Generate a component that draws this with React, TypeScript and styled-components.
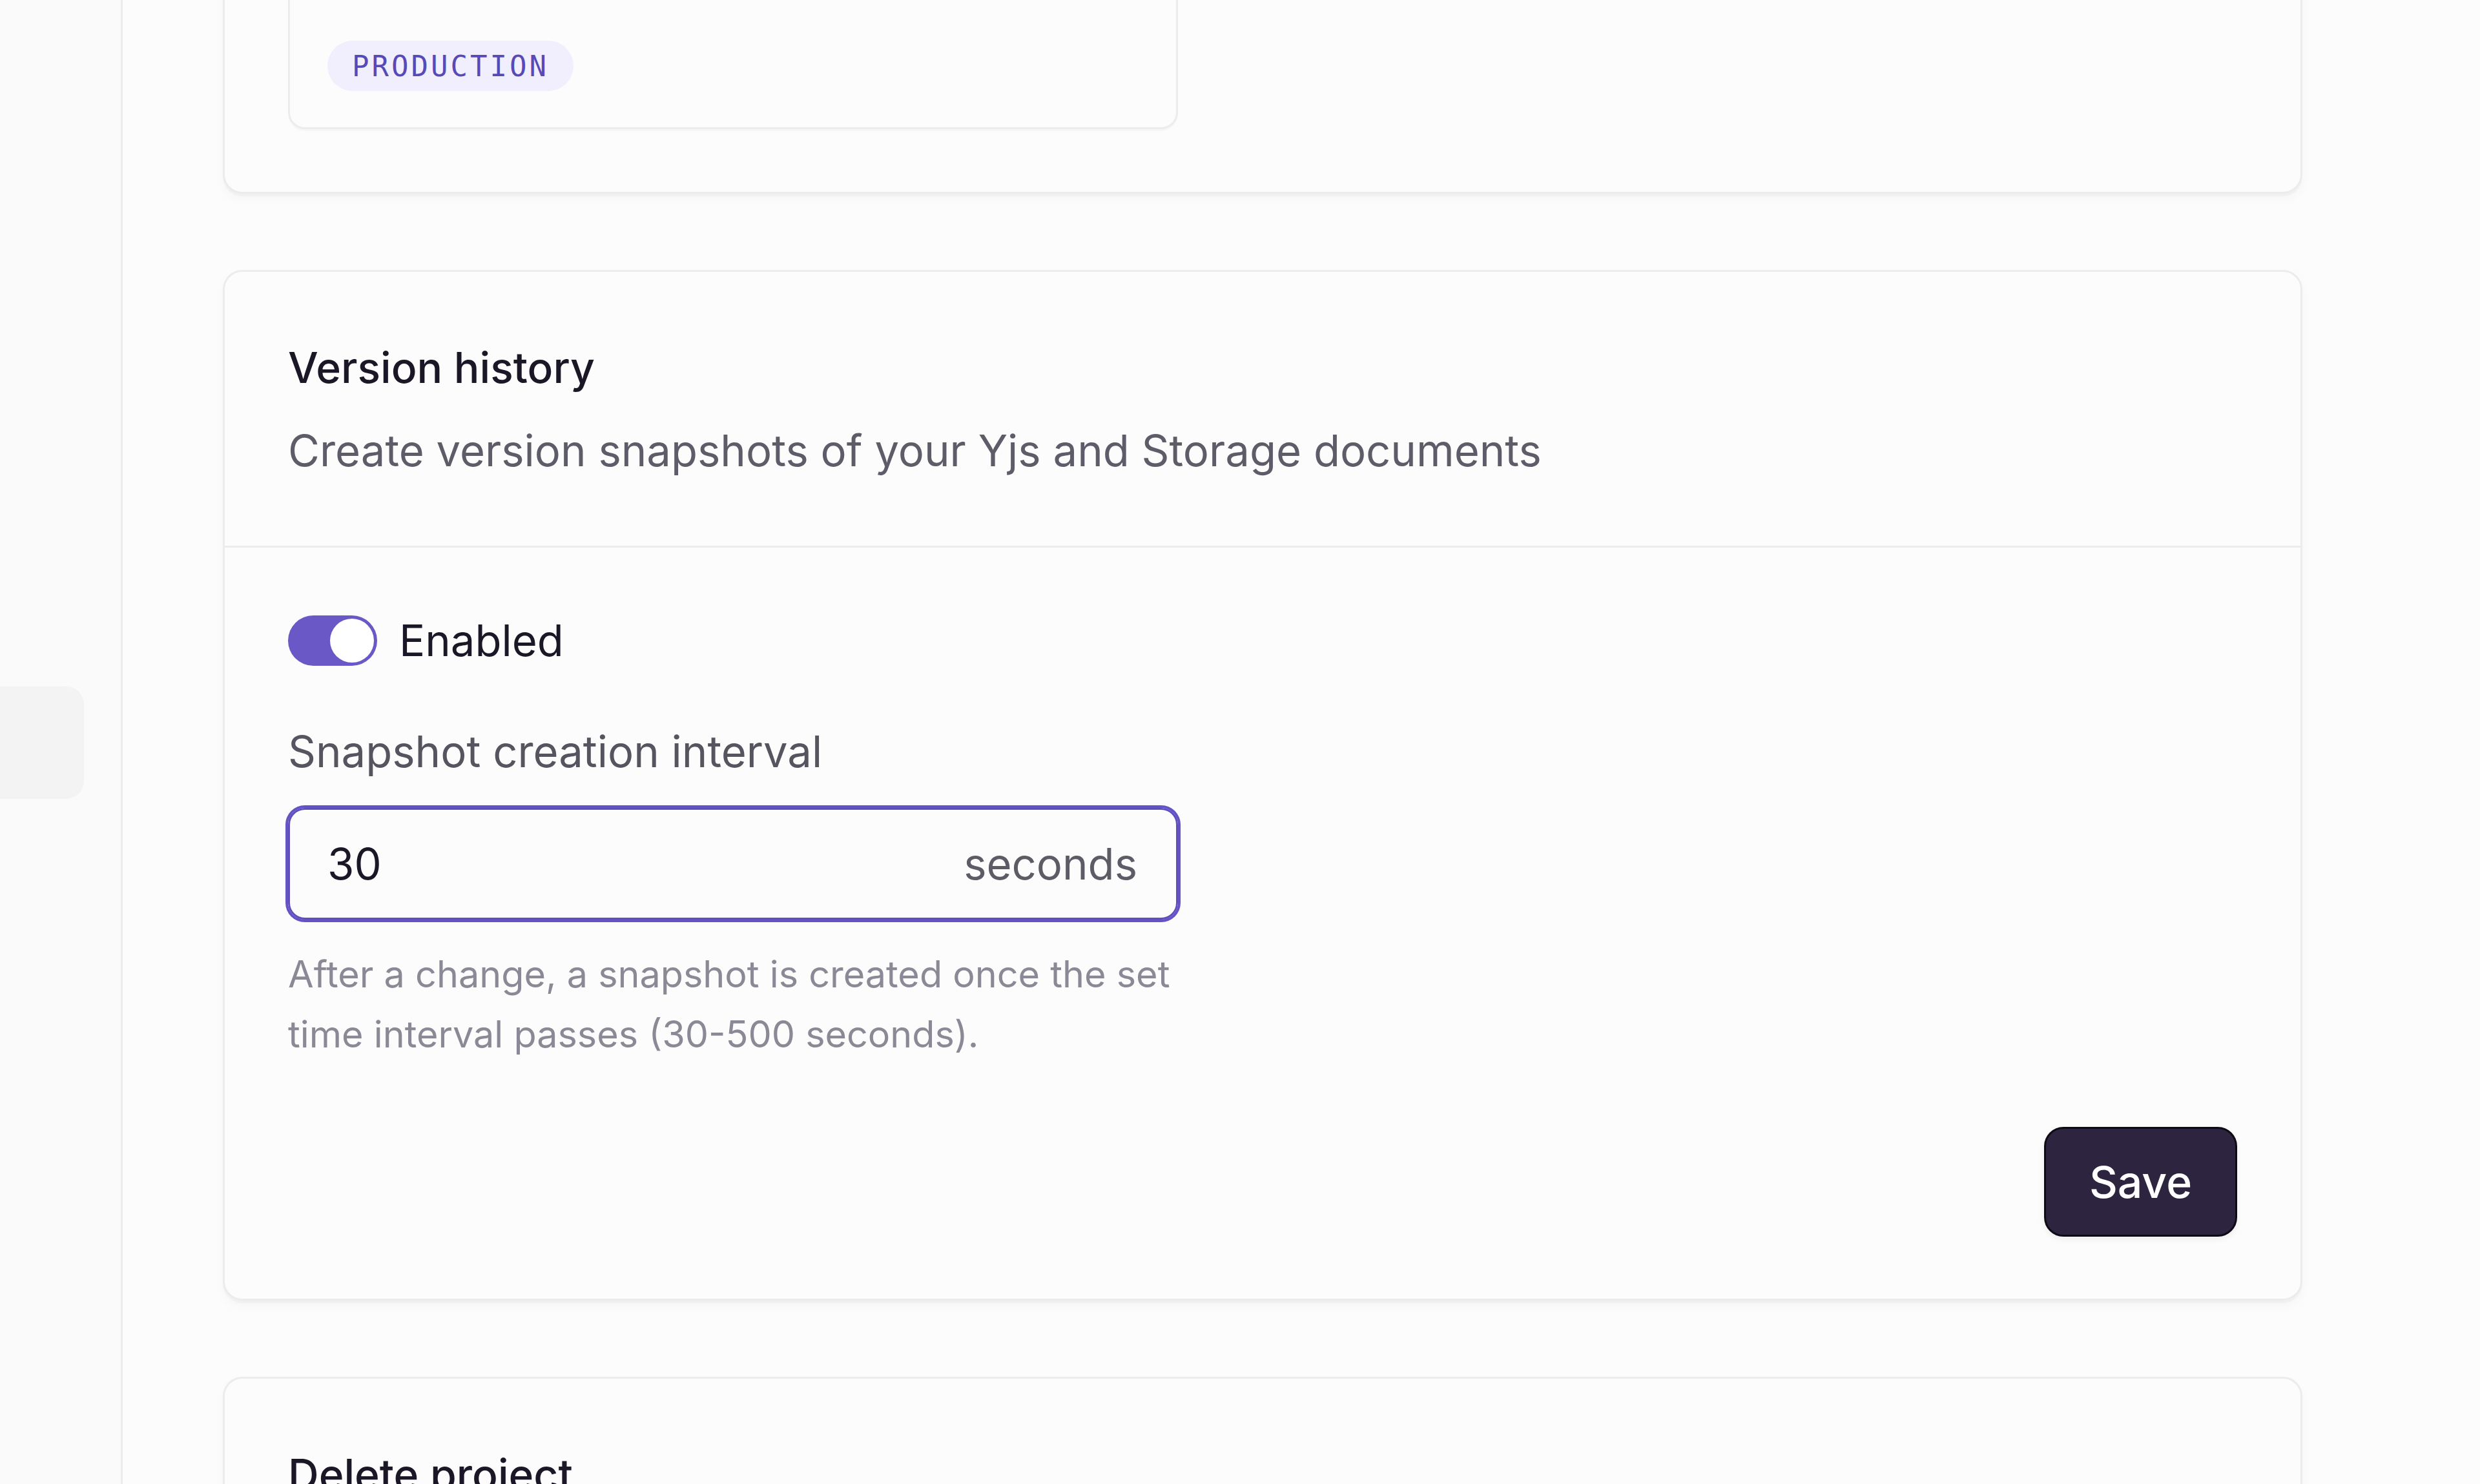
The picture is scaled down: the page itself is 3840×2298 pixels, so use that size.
import styled, { createGlobalStyle } from 'styled-components'


const GlobalStyle = createGlobalStyle`
  html, body {
    margin: 0;
    padding: 0;
    background: #fcfcfc;
  }
  body {
    font-family: Inter, "Noto Sans", sans-serif;
    color: #1b1727;
  }
`

const Shell = styled.div`
  display: flex;
  height: 100vh;
  overflow: hidden;
  background: #fcfcfc;
`

const Sidebar = styled.aside`
  width: 187px;
  flex-shrink: 0;
  border-right: 3px solid #ececee;
  background: #fafafa;
  padding-top: 1063px;
  box-sizing: content-box;
`

const NavItem = styled.div`
  width: 130px;
  height: 174px;
  background: #f3f3f4;
  border-radius: 0 28px 28px 0;
`

const Main = styled.main`
  flex: 1;
  padding: 0 275px 0 155px;
`

const Stack = styled.div`
  display: flex;
  flex-direction: column;
  gap: 118px;
  margin-top: -400px;
`

const Card = styled.section`
  background: #fcfcfc;
  border: 3px solid #ececef;
  border-radius: 30px;
  box-shadow: 0 4px 0 rgba(20, 20, 40, 0.025), 0 8px 18px rgba(20, 20, 40, 0.03);
`

const CardBody = styled.div`
  padding: 97px 98px;
`

const CardHeader = styled.div`
  padding: 101px 98px 97px;
  border-bottom: 3px solid #ececef;
  display: flex;
  flex-direction: column;
  gap: 32px;
`

const EnvBox = styled.div`
  width: 1378px;
  height: 500px;
  box-sizing: border-box;
  border: 3px solid #ececef;
  border-radius: 26px;
  padding: 0 58px 56px;
  display: flex;
  flex-direction: column;
  justify-content: flex-end;
  align-items: flex-start;
  box-shadow: 0 3px 0 rgba(20, 20, 40, 0.025);
`

const Badge = styled.span`
  display: inline-flex;
  align-items: center;
  height: 78px;
  padding: 0 38px;
  border-radius: 39px;
  background: #f1effd;
  color: #5849b8;
  font-family: "DejaVu Sans Mono", "Liberation Mono", monospace;
  font-size: 44px;
  letter-spacing: 4px;
`

const Title = styled.h2`
  margin: 0;
  font-size: 66px;
  line-height: 94px;
  font-weight: 500;
  color: #1b1727;
`

const Description = styled.p`
  margin: 0;
  font-size: 67px;
  line-height: 100px;
  color: #5d5c68;
`

const SettingsBody = styled.div`
  padding: 105px 98px 96px;
  display: flex;
  flex-direction: column;
`

const ToggleRow = styled.label`
  display: flex;
  align-items: center;
  gap: 34px;
  font-size: 67px;
  line-height: 78px;
  color: #1b1727;
`

interface SwitchProps {
  on?: boolean
}

const Switch = styled.span<SwitchProps>`
  width: 138px;
  height: 78px;
  border-radius: 39px;
  background: ${props => props.on ? '#6a58c6' : '#d8d7de'};
  display: flex;
  align-items: center;
  justify-content: ${props => props.on ? 'flex-end' : 'flex-start'};
  padding: 0 5px;
  box-sizing: border-box;
`

const Thumb = styled.span`
  width: 68px;
  height: 68px;
  border-radius: 50%;
  background: #ffffff;
  box-shadow: 0 0 0 1px rgba(106, 88, 198, 0.35);
`

const FieldLabel = styled.div`
  margin-top: 83px;
  font-size: 67px;
  line-height: 100px;
  color: #55545f;
`

const InputBox = styled.div`
  margin-top: 37px;
  width: 1378px;
  height: 173px;
  box-sizing: border-box;
  border: 3px solid #5e4fbf;
  border-radius: 26px;
  box-shadow: 0 0 0 4px #6453c4;
  display: flex;
  align-items: center;
  padding: 0 60px 0 58px;
  font-size: 67px;
`

const Value = styled.span`
  flex: 1;
  color: #1b1727;
`

const Unit = styled.span`
  color: #5d5c66;
`

const Hint = styled.p`
  margin: 38px 0 0;
  width: 1378px;
  font-size: 57.5px;
  line-height: 93px;
  color: #8a8995;
`

const Actions = styled.div`
  margin-top: 97px;
  display: flex;
  justify-content: flex-end;
`

const Button = styled.button`
  width: 299px;
  height: 170px;
  border-radius: 30px;
  border: 3px solid #0e0b16;
  background: #2d2440;
  color: #ffffff;
  font-family: Inter, sans-serif;
  font-size: 68px;
  font-weight: 500;
  box-shadow: 0 4px 10px rgba(0, 0, 0, 0.06);
`

export default function App() {
  return (
    <>
      <GlobalStyle />
      <Shell>
        <Sidebar>
          <NavItem />
        </Sidebar>
        <Main>
          <Stack>
            <Card>
              <CardBody>
                <EnvBox>
                  <Badge>PRODUCTION</Badge>
                </EnvBox>
              </CardBody>
            </Card>

            <Card>
              <CardHeader>
                <Title>Version history</Title>
                <Description>Create version snapshots of your Yjs and Storage documents</Description>
              </CardHeader>
              <SettingsBody>
                <ToggleRow>
                  <Switch on>
                    <Thumb />
                  </Switch>
                  Enabled
                </ToggleRow>
                <FieldLabel>Snapshot creation interval</FieldLabel>
                <InputBox>
                  <Value>30</Value>
                  <Unit>seconds</Unit>
                </InputBox>
                <Hint>After a change, a snapshot is created once the set time interval passes (30-500 seconds).</Hint>
                <Actions>
                  <Button>Save</Button>
                </Actions>
              </SettingsBody>
            </Card>

            <Card>
              <CardHeader>
                <Title>Delete project</Title>
              </CardHeader>
            </Card>
          </Stack>
        </Main>
      </Shell>
    </>
  )
}
